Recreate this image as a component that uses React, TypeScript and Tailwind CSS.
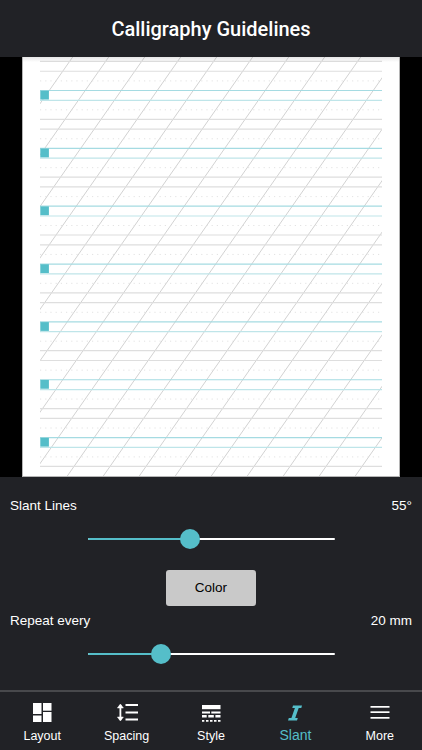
const TEAL = "#55bec9";

function Paper() {
  const ys: { y: number; k: string }[] = [];
  const P = 57.85;
  for (let i = -1; i < 7; i++) {
    const b = 90.5 + i * P;
    if (i >= 0) {
      ys.push({ y: b, k: "t" }, { y: b + 9.8, k: "t2" });
    }
    ys.push({ y: b - 9.6, k: "d" }, { y: b + 19.3, k: "d" });
    ys.push({ y: b + 28.8, k: "g" }, { y: b + 38.6, k: "g" });
  }
  const slants: number[] = [];
  for (let k = -8; k < 20; k++) slants.push(112.6 + 36 * k);
  const t = Math.tan((55 * Math.PI) / 180);
  return (
    <svg viewBox="23 57 376 419" className="block w-[376px] h-[419px]" xmlns="http://www.w3.org/2000/svg">
      <defs>
        <clipPath id="c">
          <rect x="40" y="57" width="342" height="419" />
        </clipPath>
        <linearGradient id="sh" x1="0" y1="0" x2="0" y2="1">
          <stop offset="0" stopColor="#000" stopOpacity="0.1" />
          <stop offset="1" stopColor="#000" stopOpacity="0" />
        </linearGradient>
      </defs>
      <rect x="23" y="57" width="376" height="419" fill="#fff" />
      <g clipPath="url(#c)">
        {slants.map((c) => (
          <line key={c} x1={c - 57 / t} y1={57} x2={c - 476 / t} y2={476} stroke="#d2d2d2" strokeWidth="1" />
        ))}
        {ys.map(({ y, k }) => {
          if (y < 57 || y > 476) return null;
          if (k === "d")
            return <line key={y} x1="40" x2="382" y1={y} y2={y} stroke="#dcdcdc" strokeWidth="0.8" strokeDasharray="1.2 4" />;
          if (k === "g") return <line key={y} x1="40" x2="382" y1={y} y2={y} stroke="#dedede" strokeWidth="1.2" />;
          return <line key={y} x1="40" x2="382" y1={y} y2={y} stroke={k === "t" ? "#a5dbe2" : "#bfe5e9"} strokeWidth="1.2" />;
        })}
      </g>
      {[0, 1, 2, 3, 4, 5, 6].map((i) => (
        <rect key={i} x="40.3" y={90.7 + i * P} width="8.6" height="8.8" fill={TEAL} />
      ))}
      <rect x="23" y="57" width="376" height="5" fill="url(#sh)" />
    </svg>
  );
}

function Slider({ pct }: { pct: number }) {
  return (
    <div className="relative w-[247px] h-[2px] bg-white rounded-full">
      <div className="h-full bg-[#55bec9] rounded-full" style={{ width: `${pct}%` }} />
      <div
        className="absolute top-1/2 w-5 h-5 -translate-x-1/2 -translate-y-1/2 rounded-full bg-[#55bec9]"
        style={{ left: `${pct}%` }}
      />
    </div>
  );
}

function Tab({ label, active, children }: { label: string; active?: boolean; children: React.ReactNode }) {
  return (
    <div className={`flex-1 flex flex-col items-center ${active ? "text-[#55bec9]" : "text-white"}`}>
      <div className="h-[20px] w-[24px] mt-[11px] flex items-center justify-center">{children}</div>
      <span className={active ? "text-[14px] leading-[16px] mt-[4px]" : "text-[12.5px] leading-[16px] mt-[5px]"}>{label}</span>
    </div>
  );
}

export default function App() {
  return (
    <div className="w-[422px] h-[750px] flex flex-col bg-[#212226] text-white overflow-hidden font-['Liberation_Sans',Arial,sans-serif]">
      <header className="h-[57px] shrink-0 flex items-center justify-center">
        <h1 className="text-[20px] font-medium font-['Roboto',sans-serif]">Calligraphy Guidelines</h1>
      </header>
      <div className="h-[420px] shrink-0 bg-black flex justify-center">
        <div className="w-[378px] h-[420px] bg-white border-x border-b border-[#b5b5b5]">
          <Paper />
        </div>
      </div>
      <main className="flex-1 flex flex-col">
        <div className="flex justify-between px-[10px] mt-[20px] text-[13.5px] leading-[17px]">
          <span>Slant Lines</span>
          <span>55°</span>
        </div>
        <div className="flex justify-center mt-[24px] h-[2px]">
          <Slider pct={41.5} />
        </div>
        <div className="flex justify-center mt-[30px]">
          <button className="w-[90px] h-[36px] rounded-[3px] bg-[#c9c9c9] text-black text-[13.5px]">Color</button>
        </div>
        <div className="flex justify-between px-[10px] mt-[6px] text-[13.5px] leading-[17px]">
          <span>Repeat every</span>
          <span>20 mm</span>
        </div>
        <div className="flex justify-center mt-[24px] h-[2px]">
          <Slider pct={29.7} />
        </div>
      </main>
      <nav className="h-[60px] shrink-0 border-t-2 border-[#48494c] flex">
        <Tab label="Layout">
          <svg width="20" height="20" viewBox="0 0 20 20" fill="currentColor">
            <rect x="1" y="0" width="8.5" height="11" />
            <rect x="11" y="0" width="8.5" height="7.7" />
            <rect x="1" y="12.5" width="8.5" height="6.5" />
            <rect x="11" y="9" width="8.5" height="10" />
          </svg>
        </Tab>
        <Tab label="Spacing">
          <svg width="24" height="20" viewBox="0 0 24 20" fill="none" stroke="currentColor">
            <path d="M10.5 2H23M10.5 9.5H23M10.5 16.5H23" strokeWidth="1.9" />
            <path d="M5.4 2v15" strokeWidth="1.8" />
            <path d="M2.4 5 5.4 1 8.4 5zM2.4 14 5.4 18 8.4 14z" fill="currentColor" strokeWidth="0.5" />
          </svg>
        </Tab>
        <Tab label="Style">
          <svg width="20" height="18" viewBox="0 0 20 18" fill="currentColor">
            <rect x="1" y="1" width="18.5" height="4.2" />
            <path d="M1 7.5h8v2H1zM10.3 7.5h9.2v2h-9.2z" />
            <path d="M1 11h4.7v2.4H1zM7.3 11h5.5v2.4H7.3zM14.4 11h5.1v2.4h-5.1z" />
            <path d="M1 16h2.3v1.8H1zM5 16h2.5v1.8H5zM9 16h2.5v1.8H9zM13 16h2.5v1.8H13zM17 16h2.5v1.8H17z" />
          </svg>
        </Tab>
        <Tab label="Slant" active>
          <svg width="14" height="16" viewBox="0 0 14 16" fill="currentColor">
            <path d="M5 .5h9l-.7 2.6h-2.6L7.2 12.9h2.6L9 15.5H0l.8-2.6h2.6L6.9 3.1H4.3z" />
          </svg>
        </Tab>
        <Tab label="More">
          <svg width="20" height="16" viewBox="0 0 20 16" fill="currentColor">
            <rect x="0.5" y="1" width="19" height="1.7" />
            <rect x="0.5" y="6.3" width="19" height="1.7" />
            <rect x="0.5" y="12" width="19" height="1.7" />
          </svg>
        </Tab>
      </nav>
    </div>
  );
}
